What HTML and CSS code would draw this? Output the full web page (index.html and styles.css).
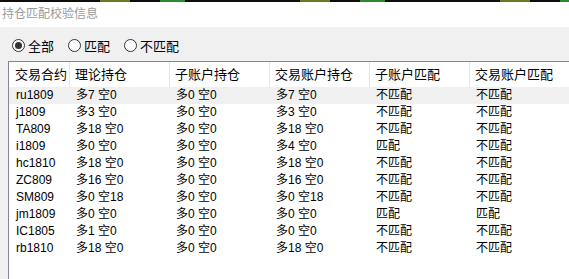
FILE: index.html
```html
<!DOCTYPE html>
<html lang="zh">
<head>
<meta charset="utf-8">
<link rel="stylesheet" href="styles.css">
</head>
<body>
<div class="strip"></div>
<div class="titlebar">持仓匹配校验信息</div>
<div class="panel">
  <div class="radios">
    <label class="radio"><span class="dot checked"></span>全部</label>
    <label class="radio"><span class="dot"></span>匹配</label>
    <label class="radio"><span class="dot"></span>不匹配</label>
  </div>
  <div class="table">
    <div class="row head">
      <div class="c c1">交易合约</div><div class="c">理论持仓</div><div class="c">子账户持仓</div><div class="c">交易账户持仓</div><div class="c">子账户匹配</div><div class="c">交易账户匹配</div>
    </div>
    <div class="row hl"><div class="c c1">ru1809</div><div class="c">多7 空0</div><div class="c">多0 空0</div><div class="c">多7 空0</div><div class="c">不匹配</div><div class="c">不匹配</div></div>
    <div class="row"><div class="c c1">j1809</div><div class="c">多3 空0</div><div class="c">多0 空0</div><div class="c">多3 空0</div><div class="c">不匹配</div><div class="c">不匹配</div></div>
    <div class="row"><div class="c c1">TA809</div><div class="c">多18 空0</div><div class="c">多0 空0</div><div class="c">多18 空0</div><div class="c">不匹配</div><div class="c">不匹配</div></div>
    <div class="row"><div class="c c1">i1809</div><div class="c">多0 空0</div><div class="c">多0 空0</div><div class="c">多4 空0</div><div class="c">匹配</div><div class="c">不匹配</div></div>
    <div class="row"><div class="c c1">hc1810</div><div class="c">多18 空0</div><div class="c">多0 空0</div><div class="c">多18 空0</div><div class="c">不匹配</div><div class="c">不匹配</div></div>
    <div class="row"><div class="c c1">ZC809</div><div class="c">多16 空0</div><div class="c">多0 空0</div><div class="c">多16 空0</div><div class="c">不匹配</div><div class="c">不匹配</div></div>
    <div class="row"><div class="c c1">SM809</div><div class="c">多0 空18</div><div class="c">多0 空0</div><div class="c">多0 空18</div><div class="c">不匹配</div><div class="c">不匹配</div></div>
    <div class="row"><div class="c c1">jm1809</div><div class="c">多0 空0</div><div class="c">多0 空0</div><div class="c">多0 空0</div><div class="c">匹配</div><div class="c">匹配</div></div>
    <div class="row"><div class="c c1">IC1805</div><div class="c">多1 空0</div><div class="c">多0 空0</div><div class="c">多0 空0</div><div class="c">不匹配</div><div class="c">不匹配</div></div>
    <div class="row"><div class="c c1">rb1810</div><div class="c">多18 空0</div><div class="c">多0 空0</div><div class="c">多18 空0</div><div class="c">不匹配</div><div class="c">不匹配</div></div>
  </div>
</div>
</body>
</html>
```
FILE: styles.css
```css
html, body {
  margin: 0;
  padding: 0;
  width: 569px;
  height: 279px;
  overflow: hidden;
  background: #f0f0f0;
  font-family: "Liberation Sans", "Noto Sans CJK SC", sans-serif;
  font-size: 12px;
  color: #000;
}
body {
  display: flex;
  flex-direction: column;
}
.strip {
  height: 2px;
  flex: none;
  background:
    repeating-linear-gradient(90deg, #0d0d0d 0 100px, #6a7a20 100px 130px, #0d0d0d 130px 160px, #2d8a2d 160px 185px, #0d0d0d 185px 200px);
}
.titlebar {
  flex: none;
  height: 25px;
  line-height: 25px;
  background: #fff;
  color: #9a9a9a;
  font-size: 12px;
  padding-left: 2px;
}
.panel {
  flex: 1;
  min-height: 0;
  display: flex;
  flex-direction: column;
  padding: 11px 0 0 8px;
  overflow: hidden;
}
.radios {
  flex: none;
  display: flex;
  align-items: center;
  height: 14px;
  padding-left: 4px;
  margin-bottom: 9px;
}
.radio {
  display: flex;
  align-items: center;
  gap: 3px;
  margin-right: 14px;
  font-size: 13px;
}
.dot {
  width: 11px;
  height: 11px;
  border: 1px solid #333;
  border-radius: 50%;
  background: #fff;
  display: flex;
  align-items: center;
  justify-content: center;
}
.dot.checked::after {
  content: "";
  width: 7px;
  height: 7px;
  border-radius: 50%;
  background: #333;
}
.table {
  flex: 1;
  min-height: 0;
  border-left: 1px solid #828790;
  border-top: 1px solid #828790;
  background: #fff;
  overflow: hidden;
}
.row {
  display: grid;
  grid-template-columns: 61px 100px 100px 100px 100px 99px;
  height: 17px;
  line-height: 17px;
}
.row .c {
  padding-left: 6px;
  white-space: nowrap;
  overflow: hidden;
}
.row .c1 {
  padding-left: 7px;
}
.row.head {
  height: 25px;
  line-height: 25px;
  font-size: 13px;
}
.row.head .c {
  border-right: 1px solid #e5e5e5;
  padding-left: 5px;
}
.row.head .c:last-child {
  border-right: none;
}
.row.head .c1 {
  padding-left: 6px;
}
.row.hl {
  background: #f0f0f0;
}
```
